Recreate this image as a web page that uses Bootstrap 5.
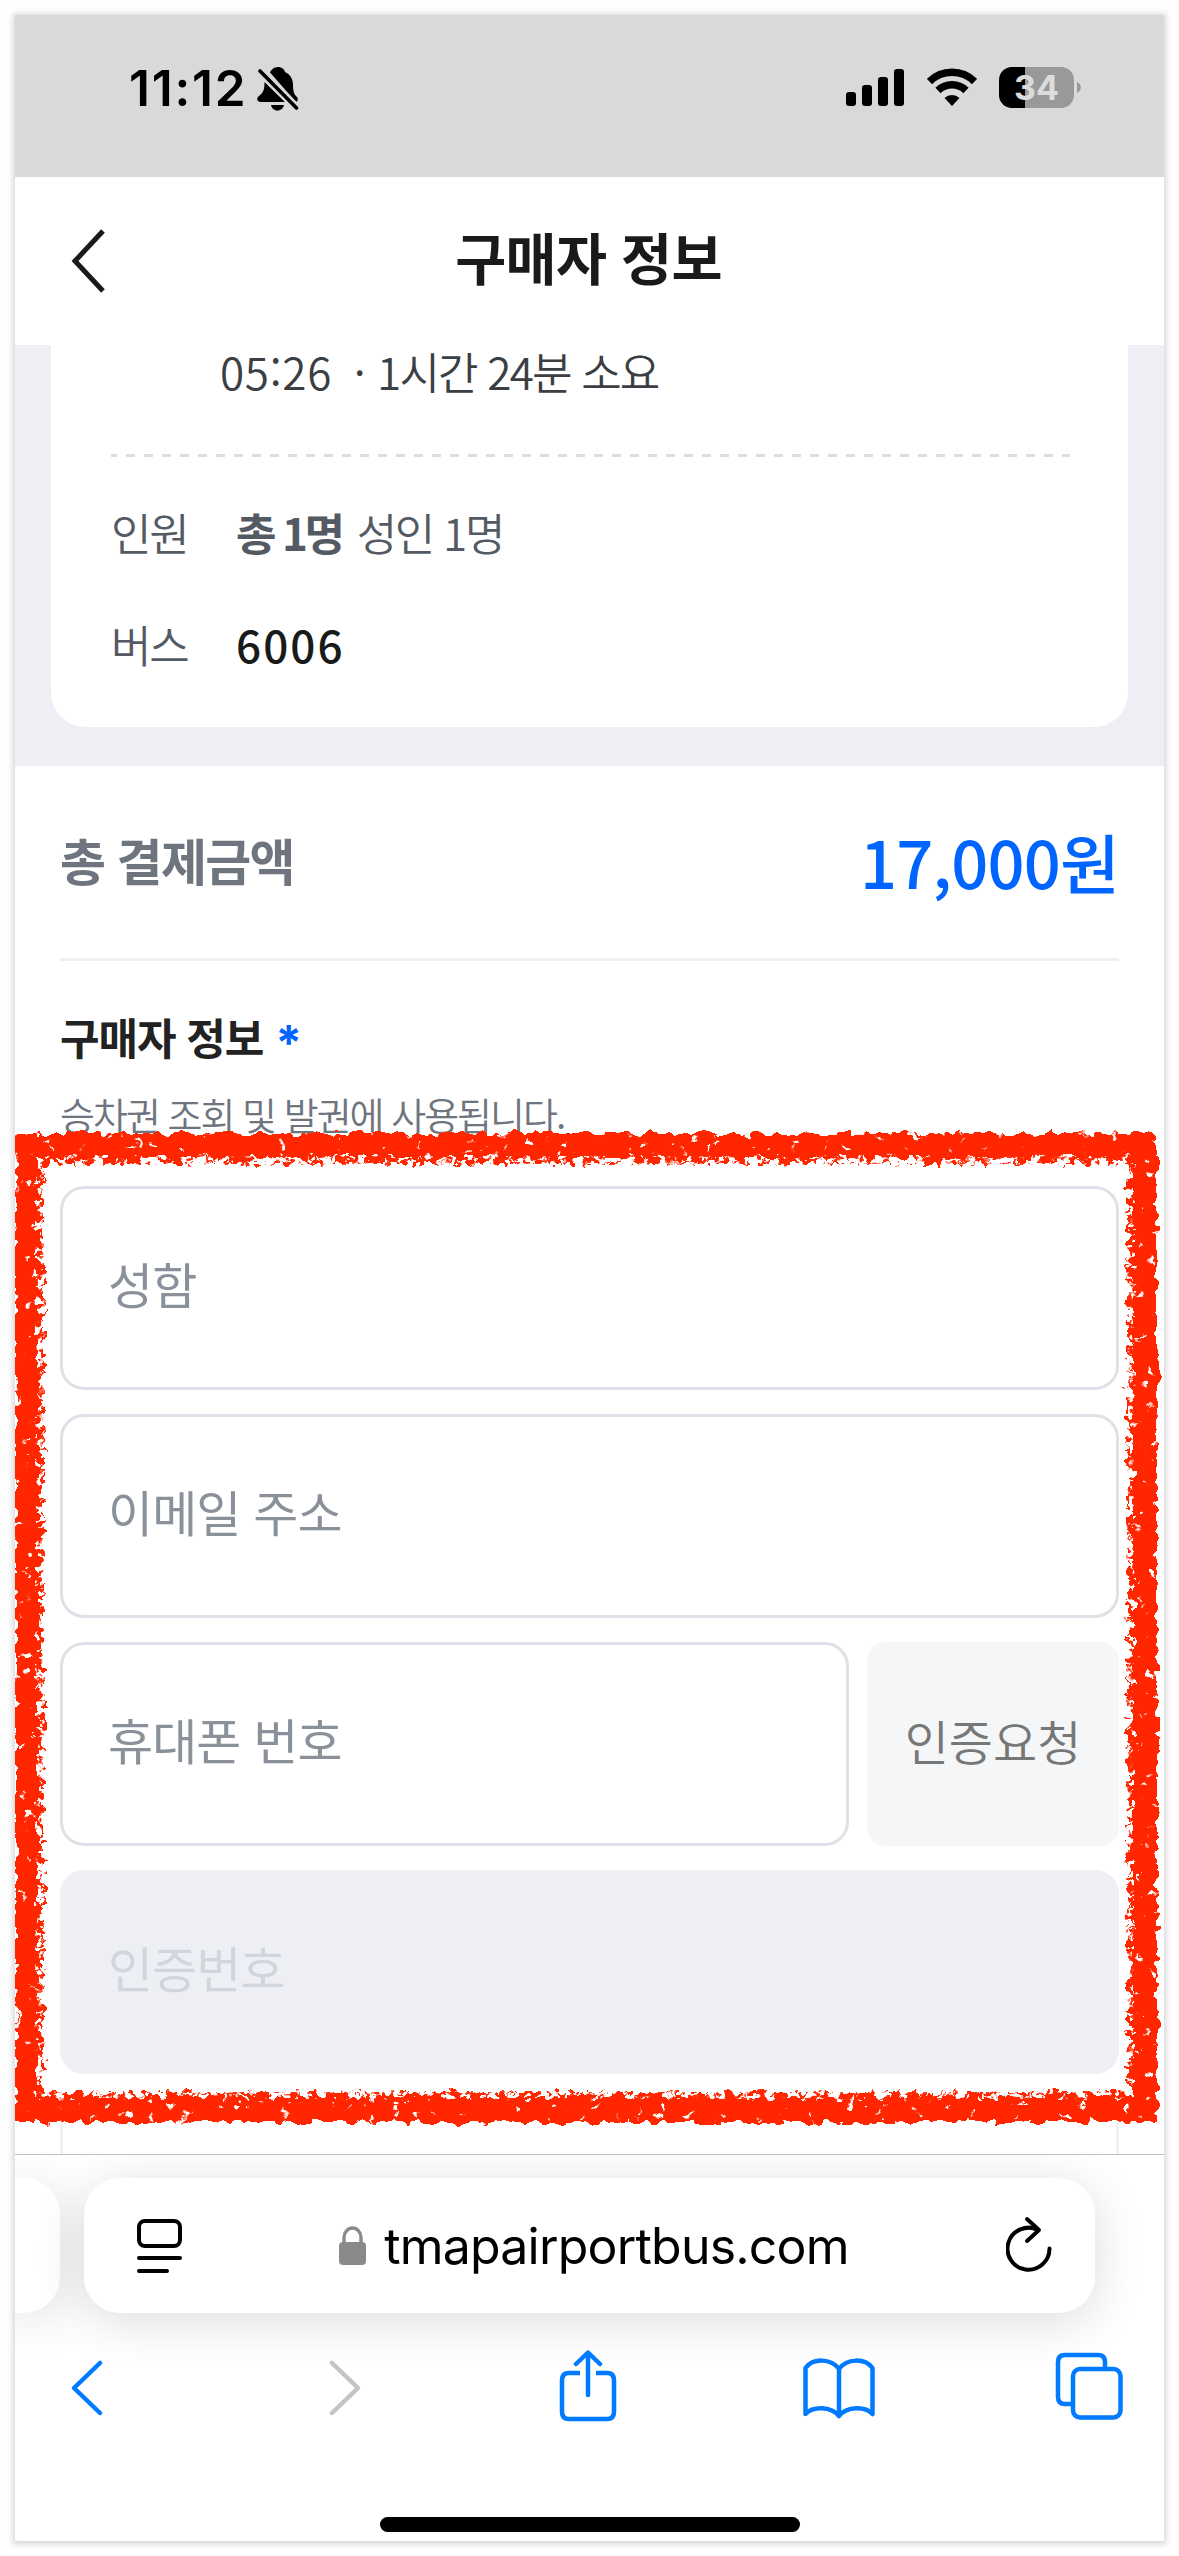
<!DOCTYPE html>
<html lang="ko">
<head>
<meta charset="utf-8">
<meta name="viewport" content="width=device-width, initial-scale=1">
<title>구매자 정보</title>
<link rel="stylesheet" href="https://cdn.jsdelivr.net/npm/bootstrap@5.3.0/dist/css/bootstrap.min.css">
<style>
  body { font-family: "Noto Sans CJK KR", "Noto Sans", sans-serif; background: #fefefe; width: 1179px; height: 2556px; overflow: hidden; padding: 15px; }
  .screen { width: 1149px; height: 2526px; box-shadow: 0 1px 6px 2px rgba(0,0,0,.16); overflow: hidden; }
  .ui-font { font-family: Inter, "Liberation Sans", sans-serif; }
  svg { display: block; flex: none; }

  .status-bar { height: 162px; background: #d9d9d9; padding: 52px 83px 0 114px; }
  .clock { font-size: 49.5px; font-weight: 600; line-height: 43px; letter-spacing: 1.8px; width: 128px; }
  .battery { width: 75px; height: 41px; border-radius: 13px; background: linear-gradient(90deg,#000 26px,#999 26px); color: #dcdcdc; font-size: 34px; font-weight: 700; line-height: 41px; margin-left: 22px; }

  .page-head { height: 168px; padding: 0 56px 0 55px; }
  .page-title { font-size: 55.5px; font-weight: 700; color: #191a1a; line-height: 80px; letter-spacing: -.7px; padding-bottom: 11px; }

  .scroll-area { height: 1819px; margin-top: -10px; padding-top: 10px; overflow: hidden; }
  .scribble { left: -15px; top: -335px; pointer-events: none; }

  .trip-area { height: 421px; background: #eeeff4; padding: 0 36px 39px; }
  .trip-card { border-radius: 0 0 34px 34px; padding: 0 58px 0 60px; height: 382px; }
  .trip-time { font-size: 44px; font-weight: 350; color: #3b3f43; line-height: 52px; padding-left: 109px; height: 109px; white-space: pre; letter-spacing: -1.8px; }
  .trip-time span { letter-spacing: .7px; word-spacing: -2.2px; }
  .dash-line { height: 3px; background: repeating-linear-gradient(90deg,#dcdde0 0 9px,transparent 9px 18px) -3px 0; }
  .trip-row { font-size: 44px; font-weight: 350; color: #545a63; line-height: 60px; letter-spacing: -2.3px; }
  .trip-row b { letter-spacing: -3.4px; margin-right: 5px; }
  .trip-key { width: 125px; }
  .bus-no { font-weight: 500; color: #191a1a; letter-spacing: 2.1px; }

  .pay-row { height: 192px; margin: 0 45px; }
  .pay-label { font-size: 50px; font-weight: 700; color: #6f757e; letter-spacing: -1.7px; padding-bottom: 6px; }
  .pay-sum { font-size: 65px; font-weight: 500; color: #0064ff; letter-spacing: -.8px; }
  .thin-rule { height: 3px; background: #eeeff4; margin: 0 45px; }
  .buyer { padding: 0 45px; }
  .buyer-title { font-size: 43px; font-weight: 700; color: #222; line-height: 60px; height: 60px; margin-top: 45px; letter-spacing: -1.1px; }
  .star { color: #0064ff; font-size: 48px; line-height: 1; vertical-align: -5px; margin-left: 1px; }
  .buyer-note { font-size: 38px; font-weight: 350; color: #6f757e; line-height: 56px; margin-top: 20px; height: 100px; letter-spacing: -2px; }
  .form-control.field { height: 204px; border: 3px solid #e0e1e8; border-radius: 24px; font-size: 49px; font-weight: 400; padding: 0 45px 12px; background: #fff; box-shadow: none; letter-spacing: -.9px; }
  .form-control.field::placeholder { color: #8b919b; opacity: 1; }
  .form-control.field:disabled { background: #eeeff4; border-color: #eeeff4; }
  .form-control.field:disabled::placeholder { color: #d1d6dc; }
  .btn.verify { width: 252px; height: 204px; border-radius: 18px; background: #f5f6f8; color: #767777; border: 0; font-size: 48px; font-weight: 350; padding: 0 0 8px; }
  .fade-field.form-control.field { border-color: #f1f1f4; }

  .browser-bar { height: 387px; border-top: 1px solid #c0c0c0; overflow: hidden; background: #fff; }
  .addr-row { height: 158px; padding-top: 23px; gap: 24px; }
  .addr-pill { height: 135px; background: #fff; box-shadow: 0 8px 50px rgba(0,0,0,.14); }
  .prev-pill { width: 45px; border-radius: 0 36px 36px 0; }
  .main-pill { width: 1011px; border-radius: 36px; padding: 0 43px 0 53px; }
  .url { font-size: 50px; line-height: 60px; color: #000; letter-spacing: -.8px; }
  .tools { height: 110px; padding: 0 40px 0 37px; margin-top: 20px; }
  .tool { width: 70px; }
  .home-bar { width: 420px; height: 15px; border-radius: 8px; background: #000; margin: 74px auto 0 365px; }
</style>
</head>
<body>
<div class="screen bg-white position-relative">
  <header class="status-bar ui-font d-flex align-items-start">
    <div class="clock text-black">11:12</div>
    <svg width="42" height="44" viewBox="0 0 42 44" class="me-auto">
      <path d="M21 0c4 0 6.500 2.500 7 5 5 2 8 7 8 13 0 8 2 10 4 12 1 1 1.500 4-1 5L13 5.500C14 3 17 0 21 0z M7.500 15 28 35H4c-4 0-5-4-2-6 4-3 5.500-6 5.500-14z M14 38h13c-.5 3-3 5.500-6.500 5.500S14.500 41 14 38z"/>
      <path d="M3 4 40 41" stroke="#d9d9d9" stroke-width="8"/><path d="M3 4 39.500 41" stroke="#000" stroke-width="3.600" stroke-linecap="round"/>
    </svg>
    <svg width="59" height="41" viewBox="0 0 59 41">
      <rect y="25" width="10" height="14" rx="3"/><rect x="16" y="18" width="10" height="21" rx="3"/><rect x="32" y="10" width="10" height="29" rx="3"/><rect x="48" y="2" width="10" height="37" rx="3"/>
    </svg>
    <svg width="50" height="41" viewBox="0 0 50 41" style="margin-left:22px">
      <g fill="none" stroke="#000"><path d="M2.500 14.500a32 32 0 0 1 45 0" stroke-width="7.500"/><path d="M11 23.500a20 20 0 0 1 28 0" stroke-width="7.500"/></g>
      <path d="M17.500 31a11 11 0 0 1 15 0L25 39z"/>
    </svg>
    <div class="battery text-center">34</div>
    <svg width="7" height="41" viewBox="0 0 7 41"><path d="M3 15c5 2 5 9 0 11z" fill="#999"/></svg>
  </header>

  <div class="page-head d-flex align-items-center">
    <svg width="35" height="64" viewBox="0 0 35 64"><path d="M33 2 5 32l28 30" fill="none" stroke="#191a1a" stroke-width="5"/></svg>
    <div class="page-title flex-grow-1 text-center">구매자 정보</div>
    <div style="width:36px"></div>
  </div>

  <main class="scroll-area position-relative">
    <section class="trip-area">
      <div class="trip-card bg-white">
        <div class="trip-time"><span>05:26  · </span>1시간 24분 소요</div>
        <div class="dash-line"></div>
        <div class="trip-row d-flex" style="margin-top:45px"><span class="trip-key">인원</span><span><b>총 1명</b> 성인 1명</span></div>
        <div class="trip-row d-flex" style="margin-top:52px"><span class="trip-key">버스</span><span class="bus-no">6006</span></div>
      </div>
    </section>
    <section class="pay-row d-flex align-items-center justify-content-between">
      <span class="pay-label">총 결제금액</span><span class="pay-sum">17,000원</span>
    </section>
    <div class="thin-rule"></div>
    <section class="buyer">
      <div class="buyer-title">구매자 정보 <span class="star ui-font">*</span></div>
      <div class="buyer-note">승차권 조회 및 발권에 사용됩니다.</div>
      <form class="d-flex flex-column gap-4">
        <input class="form-control field" placeholder="성함">
        <input class="form-control field" placeholder="이메일 주소">
        <div class="d-flex" style="gap:18px">
          <input class="form-control field" placeholder="휴대폰 번호">
          <button type="button" class="btn verify flex-shrink-0">인증요청</button>
        </div>
        <input class="form-control field" placeholder="인증번호" disabled>
        <input class="form-control field fade-field">
      </form>
    </section>
    <svg class="scribble position-absolute" width="1179" height="2200" viewBox="0 0 1179 2200">
      <defs>
        <filter id="rough" color-interpolation-filters="sRGB" filterUnits="userSpaceOnUse" x="15" y="1120" width="1150" height="1020">
          <feTurbulence type="fractalNoise" baseFrequency=".09 .1" numOctaves="2" seed="4" result="n"/>
          <feColorMatrix in="n" values="0 0 0 0 0 0 0 0 0 0 0 0 0 0 0 0 0 0 16 -4" result="m"/>
          <feComposite in="SourceGraphic" in2="m" operator="in" result="s"/>
          <feDisplacementMap in="s" in2="n" scale="14" xChannelSelector="R" yChannelSelector="G"/>
        </filter>
        <filter id="speck" color-interpolation-filters="sRGB" filterUnits="userSpaceOnUse" x="15" y="1120" width="1150" height="1020">
          <feTurbulence type="fractalNoise" baseFrequency=".12 .14" numOctaves="2" seed="9" result="n"/>
          <feColorMatrix in="n" values="0 0 0 0 0 0 0 0 0 0 0 0 0 0 0 0 0 0 16 -7.300" result="m"/>
          <feComposite in="SourceGraphic" in2="m" operator="in" result="s"/>
          <feDisplacementMap in="s" in2="n" scale="14" xChannelSelector="R" yChannelSelector="G"/>
        </filter>
      </defs>
      <g fill="none" stroke="#ff2600">
        <rect x="25" y="1145" width="1120" height="965" stroke-width="24" filter="url(#rough)"/>
        <rect x="37" y="1157" width="1097" height="942" stroke-width="14" filter="url(#speck)"/>
      </g>
    </svg>
  </main>

  <footer class="browser-bar ui-font">
    <div class="addr-row d-flex">
      <div class="addr-pill prev-pill"></div>
      <div class="addr-pill main-pill d-flex align-items-center">
        <svg width="45" height="56" viewBox="0 0 45 56" fill="none" stroke="#000" stroke-width="4" stroke-linecap="round"><rect x="2" y="3" width="41" height="25" rx="6"/><path d="M2 40h41M2 53h28"/></svg>
        <div class="d-flex align-items-center mx-auto">
          <svg width="27" height="40" viewBox="0 0 27 40" style="margin-right:18px"><rect y="16" width="27" height="23" rx="4" fill="#8a8a8d"/><path d="M5 18v-6.500a8.500 9.500 0 0 1 17 0V18" fill="none" stroke="#8a8a8d" stroke-width="3.400"/></svg>
          <span class="url">tmapairportbus.com</span>
        </div>
        <svg width="46" height="56" viewBox="0 0 46 56" fill="none" stroke="#000" stroke-width="4" stroke-linecap="round" stroke-linejoin="round" style="margin-bottom:4px"><path d="M43.500 32.500A21 21 0 1 1 32 14"/><path d="M21 3 33 14 21 25"/></svg>
      </div>
    </div>
    <div class="tools d-flex align-items-center justify-content-between">
      <div class="tool d-flex justify-content-center"><svg width="34" height="58" viewBox="0 0 34 58" fill="none" stroke="#007aff" stroke-width="4.500" stroke-linecap="round" stroke-linejoin="round"><path d="M30 4 4 29l26 25"/></svg></div>
      <div class="tool d-flex justify-content-center ps-3"><svg width="34" height="58" viewBox="0 0 34 58" fill="none" stroke="#c4c4c6" stroke-width="4.500" stroke-linecap="round" stroke-linejoin="round"><path d="M3 4l26 25L3 54"/></svg></div>
      <div class="tool d-flex justify-content-center pb-1"><svg width="58" height="72" viewBox="0 0 58 72" fill="none" stroke="#007aff" stroke-width="4.500" stroke-linecap="round" stroke-linejoin="round"><path d="M21 23H10q-7 0-7 7v32q0 7 7 7h38q7 0 7-7V30q0-7-7-7H37" stroke-linecap="butt"/><path d="M29 45V3M17 14 29 2.500 41 14"/></svg></div>
      <div class="tool d-flex justify-content-center"><svg width="72" height="62" viewBox="0 0 72 62" fill="none" stroke="#007aff" stroke-width="4.500" stroke-linecap="round" stroke-linejoin="round"><path d="M36 12C28 1 10 1 2.500 11v46C10 49 28 49 36 59 44 49 62 49 69.500 57V11C62 1 44 1 36 12zM36 12v46"/></svg></div>
      <div class="tool d-flex justify-content-center pb-1"><svg width="68" height="68" viewBox="0 0 68 68" fill="none" stroke="#007aff" stroke-width="4.500"><rect x="18" y="17" width="47.500" height="48.500" rx="7"/><path d="M50 16v-6q0-7-7-7H10q-7 0-7 7v35q0 7 7 7h8"/></svg></div>
    </div>
    <div class="home-bar"></div>
  </footer>
</div>
<script src="https://cdn.jsdelivr.net/npm/bootstrap@5.3.0/dist/js/bootstrap.bundle.min.js"></script>
</body>
</html>
